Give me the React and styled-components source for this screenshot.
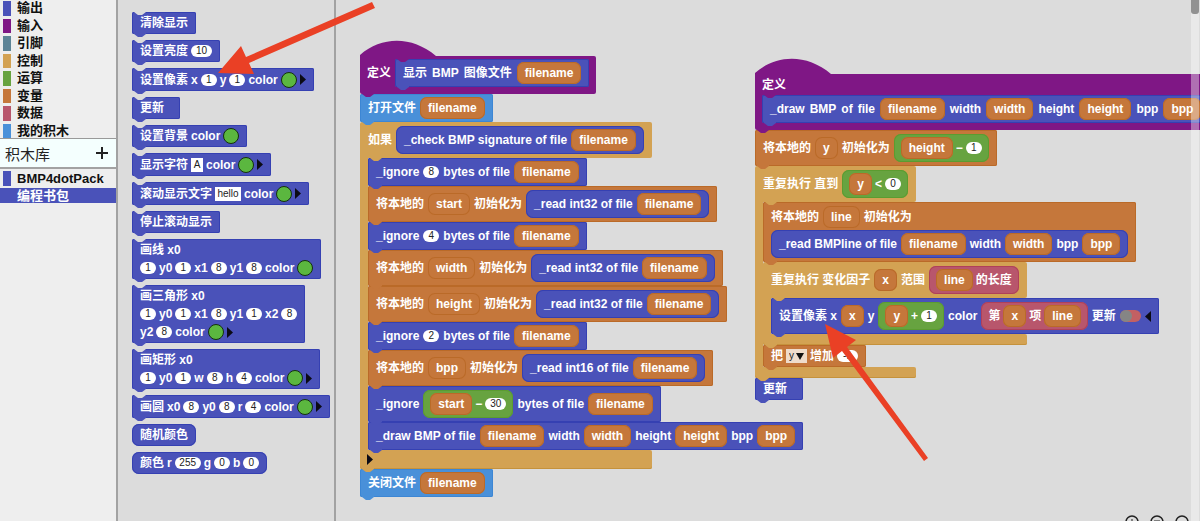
import React from "react";
import styled, { createGlobalStyle, css } from "styled-components";

const GlobalStyle = createGlobalStyle`
  *, *::before, *::after { box-sizing: border-box; }
  body {
    margin: 0;
    overflow: hidden;
    font-family: "Liberation Sans", "Noto Sans CJK SC", sans-serif;
    font-size: 12px;
    background: #dcdcdc;
  }
  button, input, select { font: inherit; }
`;

const tones = {
  blue: { fill: "#4a52b9", edge: "#3540b2" },
  purple: { fill: "#7f1785", edge: "#741079" },
  orange: { fill: "#c5773b", edge: "#ba6a28" },
  green: { fill: "#67a340", edge: "#5b9c30" },
  gold: { fill: "#d3a253", edge: "#c5923c" },
  sky: { fill: "#4990d9", edge: "#3c86d4" },
  rose: { fill: "#b8566c", edge: "#b0405a" },
  teal: { fill: "#5d8496", edge: "#5d8496" },
};

/* ---------- page ---------- */

const Shell = styled.div`
  position: relative;
  display: flex;
  height: 100vh;
  overflow: hidden;
`;

const Sidebar = styled.nav`
  flex: none;
  width: 118px;
  background: #eee;
  border-right: 2px solid #a2a2a2;
`;

const CategoryList = styled.div`
  display: grid;
  grid-auto-rows: 1fr;
  gap: 3px;
  height: 138px;
  padding-top: 1px;
`;

const Category = styled.button`
  display: flex;
  align-items: center;
  gap: 6px;
  width: 100%;
  padding: 0 0 0 3px;
  border: 0;
  font-size: 13px;
  font-weight: 700;
  line-height: 14px;
  text-align: left;
  color: ${(p) => (p.$active ? "#fff" : "#111")};
  background: ${(p) => (p.$active ? tones.blue.fill : "transparent")};
`;

const Chip = styled.span`
  align-self: stretch;
  width: 8px;
  background: ${(p) => (p.$tone ? tones[p.$tone].fill : "transparent")};
`;

const LibraryBar = styled.div`
  display: flex;
  align-items: center;
  justify-content: space-between;
  height: 31px;
  padding: 0 8px 0 5px;
  font-size: 15px;
  color: #222;
  background: #f4fffe;
  border-top: 1px solid #999;
  border-bottom: 2px solid #a2a2a2;
`;

const AddButton = styled.button`
  display: flex;
  padding: 0;
  border: 0;
  background: none;
`;

const LibraryList = styled.div`
  display: grid;
  grid-auto-rows: 15px;
  gap: 2px;
  padding-top: 2px;
`;

const Palette = styled.aside`
  flex: none;
  display: flex;
  flex-direction: column;
  gap: 6px;
  width: 218px;
  padding: 12px 0 0 14px;
  border-right: 2px solid #a2a2a2;
`;

const Canvas = styled.main`
  position: relative;
  flex: 1;
  min-width: 0;
  overflow: hidden;
`;

const Script = styled.section`
  position: absolute;
  left: ${(p) => p.$x}px;
  top: ${(p) => p.$y}px;
`;

const ScrollTrack = styled.div`
  position: absolute;
  z-index: 3;
  top: 0;
  bottom: 0;
  right: 1px;
  width: 8px;
  background: rgba(255, 255, 255, 0.38);
`;

const ScrollThumb = styled.div`
  height: 14px;
  border-radius: 0 0 3px 3px;
  background: #929292;
`;

const ZoomTools = styled.div`
  position: absolute;
  right: 11px;
  bottom: -8px;
  display: flex;
  gap: 11px;
`;

const ZoomButton = styled.button`
  display: flex;
  padding: 0;
  border: 0;
  background: none;
`;

const Annotations = styled.svg`
  position: absolute;
  z-index: 5;
  inset: 0;
  width: 100%;
  height: 100%;
  pointer-events: none;
`;

/* ---------- blocks ---------- */

const surface = css`
  color: #fff;
  font-weight: 700;
  background: ${(p) => tones[p.$tone].fill};
  box-shadow: inset 0 0 0 1px ${(p) => tones[p.$tone].edge};
`;

/* The connector below a block. It covers the top edge of the next one. */
const connector = css`
  position: relative;
  &::after {
    content: "";
    position: absolute;
    z-index: 1;
    top: calc(100% - 1px);
    left: ${(p) => (p.$slot ? 10 : 2)}px;
    width: 12px;
    height: 4px;
    background: ${(p) => tones[p.$tone].fill};
    clip-path: polygon(0 0, 100% 0, 100% 25%, 67% 100%, 33% 100%, 0 25%);
  }
`;

const Command = styled.div`
  ${surface}
  ${connector}
  display: flex;
  flex-direction: column;
  align-items: flex-start;
  justify-content: center;
  gap: 2px;
  width: max-content;
  min-width: 48px;
  padding: ${(p) => (p.$roomy ? 4 : 3)}px 8px;
  border-radius: 2px;
  ${(p) =>
    p.$cut &&
    css`
      &::before {
        content: "";
        position: absolute;
        top: 0;
        left: 2px;
        width: 12px;
        height: 3px;
        background: ${p.$cut};
        clip-path: polygon(0 0, 100% 0, 67% 100%, 33% 100%);
      }
    `}
`;

const Reporter = styled.div`
  ${surface}
  display: flex;
  align-items: center;
  gap: ${(p) => p.$gap || 4}px;
  width: max-content;
  padding: 3px ${(p) => (p.$tight ? 7 : 8)}px;
  border-radius: 7px;
`;

const Line = styled.div`
  display: flex;
  align-items: center;
  gap: ${(p) => p.$gap || 4}px;
`;

const Word = styled.span`
  line-height: 16px;
  white-space: nowrap;
`;

const HatBump = styled.svg`
  display: block;
  width: 78px;
  height: 17px;
  margin-bottom: -1px;
`;

const HatBar = styled.div`
  ${connector}
  display: flex;
  flex-direction: ${(p) => (p.$stacked ? "column" : "row")};
  align-items: ${(p) => (p.$stacked ? "flex-start" : "center")};
  gap: ${(p) => (p.$stacked ? 2 : 4)}px;
  width: max-content;
  padding: 3px 7px 7px;
  border-radius: 0 2px 2px 2px;
  color: #fff;
  font-weight: 700;
  background: ${tones.purple.fill};
`;

const Loop = styled.div`
  display: grid;
  width: max-content;
`;

const LoopHead = styled.div`
  ${surface}
  ${connector}
  box-shadow: none;
  display: flex;
  align-items: center;
  gap: 4px;
  padding: 4px 8px;
  border-radius: 2px 2px 2px 0;
`;

const LoopBody = styled.div`
  width: 0;
  min-width: 100%;
  border-left: 8px solid ${tones.gold.fill};
`;

const LoopFoot = styled.div`
  ${surface}
  ${connector}
  display: flex;
  align-items: center;
  height: ${(p) => (p.$tall ? 19 : 11)}px;
  padding: 0 7px;
  border-radius: 0 2px 2px 2px;
  box-shadow: inset 0 -1px 0 ${tones.gold.edge};
`;

const NumberSlot = styled.input`
  width: ${(p) => p.$digits * 5 + 11}px;
  height: 12px;
  padding: 0;
  border: 0;
  border-radius: 6px;
  font-size: 10px;
  font-weight: 400;
  line-height: 12px;
  text-align: center;
  color: #222;
  background: #fff;
`;

const TextSlot = styled.input`
  width: ${(p) => p.$width}px;
  height: 14px;
  padding: 0;
  border: 0;
  font-size: 10px;
  font-weight: 400;
  text-align: center;
  color: #222;
  background: #fff;
`;

const ColorSlot = styled.button`
  width: 16px;
  height: 16px;
  padding: 0;
  border: 1px solid #14300d;
  border-radius: 50%;
  background: #5bb73f;
`;

const ArrowButton = styled.button`
  display: flex;
  align-items: center;
  height: ${(p) => p.$height || 17}px;
  padding: 0;
  border: 0;
  background: none;
`;

const Toggle = styled.input`
  appearance: none;
  display: flex;
  width: 21px;
  height: 12px;
  margin: 0;
  border-radius: 6px;
  background: #c26063;
  &::before {
    content: "";
    width: 12px;
    height: 12px;
    border-radius: 50%;
    background: #858585;
  }
`;

const PickerFrame = styled.span`
  position: relative;
  display: flex;
`;

const Picker = styled.select`
  appearance: none;
  width: 21px;
  height: 14px;
  padding: 0 0 0 3px;
  border: 0;
  border-radius: 0;
  font-size: 10px;
  font-weight: 400;
  line-height: 14px;
  color: #222;
  background: #efdccb;
`;

const PickerMark = styled.svg`
  position: absolute;
  right: 3px;
  top: 4px;
  pointer-events: none;
`;

/* ---------- small parts ---------- */

const Num = ({ value }) => (
  <NumberSlot aria-label="数值" defaultValue={value} $digits={String(value).length} />
);

const Color = () => <ColorSlot aria-label="color" />;

const Expand = ({ left, height }) => (
  <ArrowButton aria-label={left ? "收起" : "展开"} $height={height}>
    <svg width="6" height="11">
      <path d={left ? "M6 0V11L0 5.5Z" : "M0 0V11L6 5.5Z"} fill="#0b0b16" />
    </svg>
  </ArrowButton>
);

const Var = ({ children }) => (
  <Reporter $tone="orange">
    <Word>{children}</Word>
  </Reporter>
);

/* Strings become words, everything else is placed as it is. */
const parts = (items) =>
  items.map((item, i) =>
    typeof item === "string" ? (
      <Word key={i}>{item}</Word>
    ) : (
      <React.Fragment key={i}>{item}</React.Fragment>
    )
  );

const PaletteBlock = ({ lines }) => (
  <Command $tone="blue" $cut="#dcdcdc">
    {lines.map((items, i) => (
      <Line key={i} $gap={3}>
        {parts(items)}
      </Line>
    ))}
  </Command>
);

const Block = ({ tone = "blue", roomy, items }) => (
  <Command $tone={tone} $roomy={roomy}>
    <Line>{parts(items)}</Line>
  </Command>
);

const Call = ({ items }) => <Reporter $tone="blue">{parts(items)}</Reporter>;

const Operator = ({ tone = "green", items }) => (
  <Reporter $tone={tone} $gap={3} $tight>
    {parts(items)}
  </Reporter>
);

const Prototype = ({ items }) => (
  <Command $tone="blue" $cut={tones.purple.fill}>
    <Line $gap={5}>{parts(items)}</Line>
  </Command>
);

const Hat = ({ stacked, items }) => (
  <>
    <HatBump>
      <path d="M0 15C22 -4 52 -4 76 16L78 17H0Z" fill={tones.purple.fill} />
    </HatBump>
    <HatBar $tone="purple" $stacked={stacked}>
      <Word>定义</Word>
      <Prototype items={items} />
    </HatBar>
  </>
);

const CBlock = ({ items, expandable, children }) => (
  <Loop>
    <LoopHead $tone="gold" $slot>
      {parts(items)}
    </LoopHead>
    <LoopBody>{children}</LoopBody>
    <LoopFoot $tone="gold" $tall={expandable}>
      {expandable && <Expand />}
    </LoopFoot>
  </Loop>
);

const filename = <Var>filename</Var>;

const Declare = ({ name, reader }) => (
  <Block
    tone="orange"
    roomy
    items={["将本地的", <Var>{name}</Var>, "初始化为", <Call items={[reader, filename]} />]}
  />
);

const Ignore = ({ count }) => (
  <Block items={["_ignore", <Num value={count} />, "bytes of file", filename]} />
);

/* ---------- content ---------- */

const categories = [
  ["blue", "输出"],
  ["purple", "输入"],
  ["teal", "引脚"],
  ["gold", "控制"],
  ["green", "运算"],
  ["orange", "变量"],
  ["rose", "数据"],
  ["sky", "我的积木"],
];

const n1 = <Num value="1" />;
const n4 = <Num value="4" />;
const n8 = <Num value="8" />;

const paletteBlocks = [
  [["清除显示"]],
  [["设置亮度", <Num value="10" />]],
  [["设置像素", "x", n1, "y", n1, "color", <Color />, <Expand />]],
  [["更新"]],
  [["设置背景", "color", <Color />]],
  [["显示字符", <TextSlot aria-label="字符" defaultValue="A" $width={12} />, "color", <Color />, <Expand />]],
  [["滚动显示文字", <TextSlot aria-label="文字" defaultValue="hello" $width={26} />, "color", <Color />, <Expand />]],
  [["停止滚动显示"]],
  [["画线 x0"], [n1, "y0", n1, "x1", n8, "y1", n8, "color", <Color />]],
  [["画三角形 x0"], [n1, "y0", n1, "x1", n8, "y1", n1, "x2", n8], ["y2", n8, "color", <Color />, <Expand height={16} />]],
  [["画矩形 x0"], [n1, "y0", n1, "w", n8, "h", n4, "color", <Color />, <Expand height={16} />]],
  [["画圆", "x0", n8, "y0", n8, "r", n4, "color", <Color />, <Expand />]],
];

export default function App() {
  return (
    <Shell>
      <GlobalStyle />
      <Sidebar>
        <CategoryList>
          {categories.map(([tone, name]) => (
            <Category key={name}>
              <Chip $tone={tone} />
              {name}
            </Category>
          ))}
        </CategoryList>
        <LibraryBar>
          积木库
          <AddButton aria-label="添加积木库">
            <svg width="12" height="12" stroke="#222" strokeWidth="2">
              <path d="M6 0V12M0 6H12" />
            </svg>
          </AddButton>
        </LibraryBar>
        <LibraryList>
          <Category>
            <Chip $tone="blue" />
            BMP4dotPack
          </Category>
          <Category $active>
            <Chip />
            编程书包
          </Category>
        </LibraryList>
      </Sidebar>

      <Palette>
        {paletteBlocks.map((lines, i) => (
          <PaletteBlock key={i} lines={lines} />
        ))}
        <Reporter $tone="blue">
          <Word>随机颜色</Word>
        </Reporter>
        <Reporter $tone="blue" $gap={3}>
          {parts(["颜色", "r", <Num value="255" />, "g", <Num value="0" />, "b", <Num value="0" />])}
        </Reporter>
      </Palette>

      <Canvas>
        <Script $x={24} $y={40}>
          <Hat items={["显示", "BMP", "图像文件", filename]} />
          <Block tone="sky" items={["打开文件", filename]} />
          <CBlock
            expandable
            items={["如果", <Call items={["_check BMP signature of file", filename]} />]}
          >
            <Ignore count="8" />
            <Declare name="start" reader="_read int32 of file" />
            <Ignore count="4" />
            <Declare name="width" reader="_read int32 of file" />
            <Declare name="height" reader="_read int32 of file" />
            <Ignore count="2" />
            <Declare name="bpp" reader="_read int16 of file" />
            <Block
              roomy
              items={[
                "_ignore",
                <Operator items={[<Var>start</Var>, "−", <Num value="30" />]} />,
                "bytes of file",
                filename,
              ]}
            />
            <Block
              items={[
                "_draw BMP of file",
                filename,
                "width",
                <Var>width</Var>,
                "height",
                <Var>height</Var>,
                "bpp",
                <Var>bpp</Var>,
              ]}
            />
          </CBlock>
          <Block tone="sky" items={["关闭文件", filename]} />
        </Script>

        <Script $x={419} $y={58}>
          <Hat
            stacked
            items={[
              "_draw",
              "BMP",
              "of",
              "file",
              filename,
              "width",
              <Var>width</Var>,
              "height",
              <Var>height</Var>,
              "bpp",
              <Var>bpp</Var>,
            ]}
          />
          <Block
            tone="orange"
            roomy
            items={[
              "将本地的",
              <Var>y</Var>,
              "初始化为",
              <Operator items={[<Var>height</Var>, "−", n1]} />,
            ]}
          />
          <CBlock
            items={[
              "重复执行 直到",
              <Operator items={[<Var>y</Var>, "<", <Num value="0" />]} />,
            ]}
          >
            <Command $tone="orange" $roomy>
              <Line>{parts(["将本地的", <Var>line</Var>, "初始化为"])}</Line>
              <Call
                items={[
                  "_read BMPline of file",
                  filename,
                  "width",
                  <Var>width</Var>,
                  "bpp",
                  <Var>bpp</Var>,
                ]}
              />
            </Command>
            <CBlock
              items={[
                "重复执行 变化因子",
                <Var>x</Var>,
                "范围",
                <Operator tone="rose" items={[<Var>line</Var>, "的长度"]} />,
              ]}
            >
              <Block
                roomy
                items={[
                  "设置像素 x",
                  <Var>x</Var>,
                  "y",
                  <Operator items={[<Var>y</Var>, "+", n1]} />,
                  "color",
                  <Operator tone="rose" items={["第", <Var>x</Var>, "项", <Var>line</Var>]} />,
                  "更新",
                  <Toggle type="checkbox" aria-label="更新" />,
                  <Expand left />,
                ]}
              />
            </CBlock>
            <Command $tone="orange">
              <Line $gap={3}>
                <Word>把</Word>
                <PickerFrame>
                  <Picker aria-label="变量" defaultValue="y">
                    <option>y</option>
                  </Picker>
                  <PickerMark width="8" height="7">
                    <path d="M0 0H8L4 7Z" fill="#111" />
                  </PickerMark>
                </PickerFrame>
                <Word>增加</Word>
                <Num value="-1" />
              </Line>
            </Command>
          </CBlock>
          <Block items={["更新"]} />
        </Script>

        <ScrollTrack>
          <ScrollThumb />
        </ScrollTrack>
        <ZoomTools>
          {["M7 4V10M4 7H10", "M4 6H10M4 8H10", ""].map((d, i) => (
            <ZoomButton key={i} aria-label={["放大", "还原", "缩小"][i]}>
              <svg width="14" height="14" fill="none" stroke="#222">
                <circle cx="7" cy="7" r="6" strokeWidth="1.5" />
                <path d={d} />
              </svg>
            </ZoomButton>
          ))}
        </ZoomTools>
      </Canvas>

      <Annotations fill="#ea4025">
        <path d="M218 73L241 46L246 57L372 2L375 8L249 63L254 74Z" />
        <path d="M825 324L856 340L847 347L928 458L924 461L842 351L833 358Z" />
      </Annotations>
    </Shell>
  );
}
